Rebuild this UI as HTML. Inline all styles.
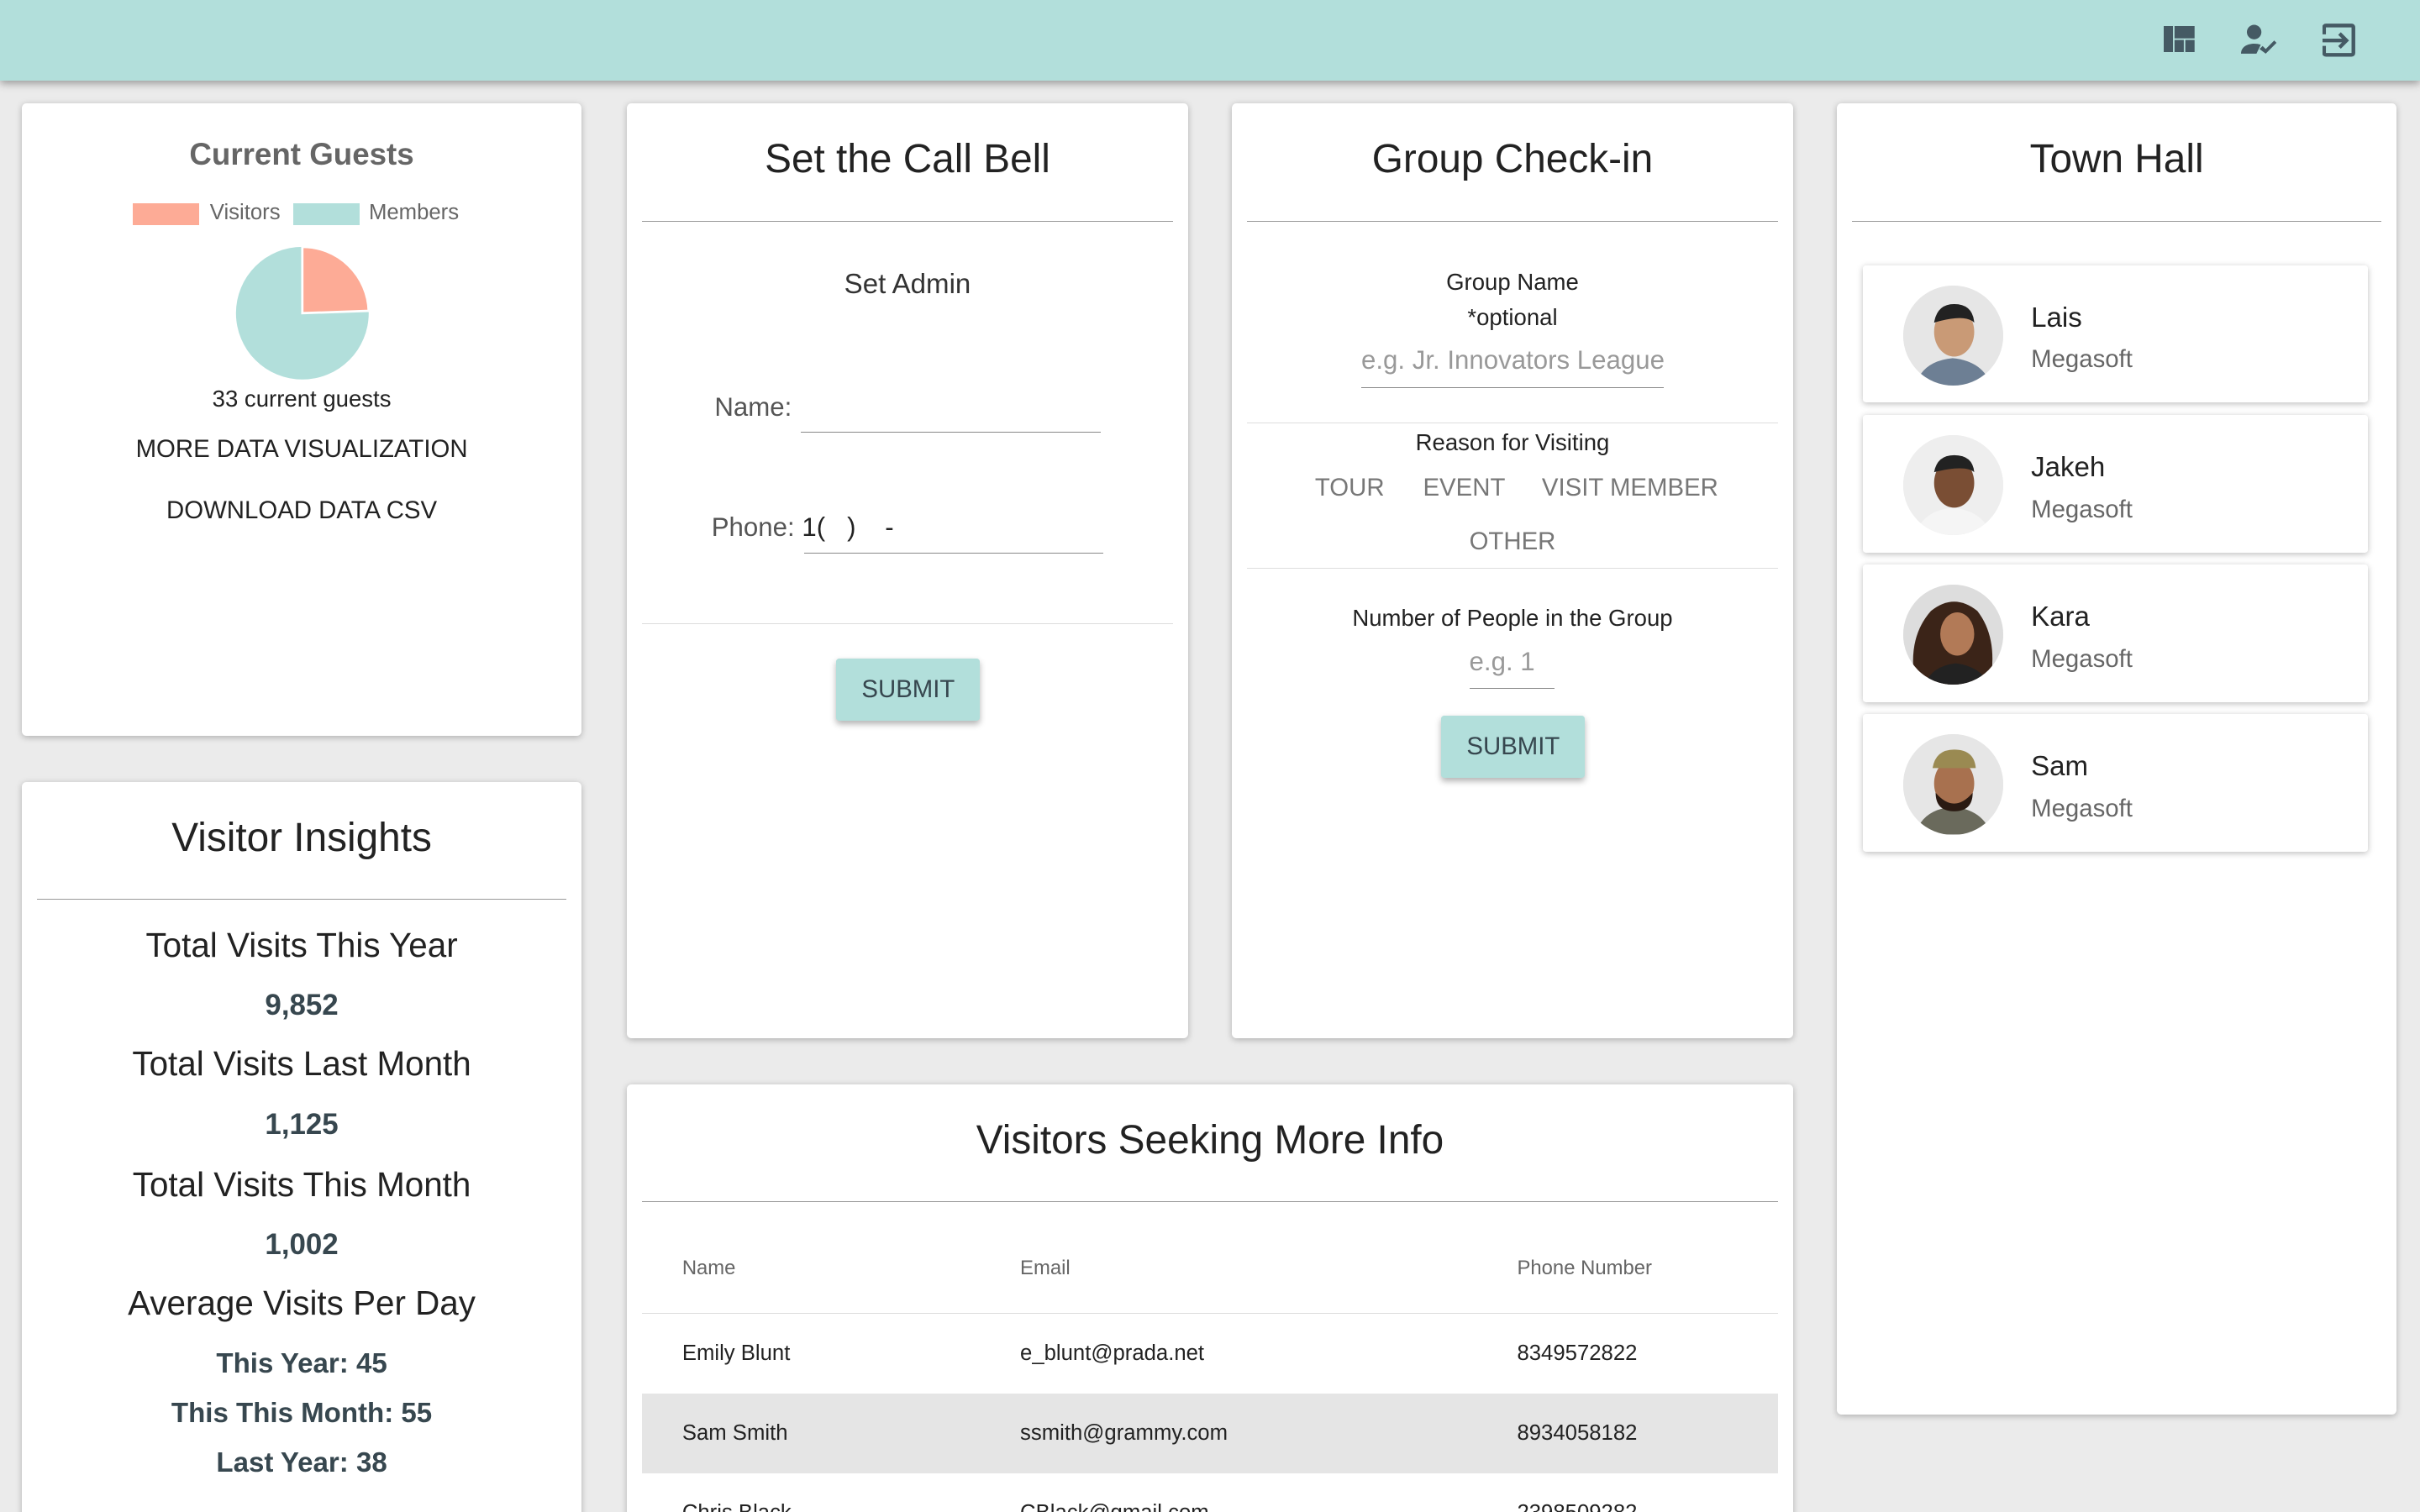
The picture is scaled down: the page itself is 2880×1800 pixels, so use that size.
<!DOCTYPE html>
<html><head><meta charset="utf-8"><style>
*{box-sizing:border-box;margin:0;padding:0}
html,body{width:2880px;height:1800px;overflow:hidden;background:#ebebeb}
#r{zoom:1.83673;width:1568px;height:980px;position:relative;font-family:"Liberation Sans",Helvetica,Arial,sans-serif;color:#222}
.hdr{position:absolute;left:0;top:0;width:1568px;height:52px;background:#b2dfdb;box-shadow:0 2px 5px rgba(0,0,0,.35)}
.card{position:absolute;background:#fff;border-radius:3px;box-shadow:0 1px 4px rgba(0,0,0,.25);text-align:center}
.t{font-size:26px;color:#222;padding-top:21px;height:77px;border-bottom:1px solid #999;margin:0 10px}
.c{position:absolute;left:0;right:0;text-align:center}
.btn{position:absolute;background:#b2dfdb;color:#37474f;font-size:16px;width:93px;height:40px;line-height:40px;border-radius:2px;box-shadow:0 2px 4px rgba(0,0,0,.3)}
.person{position:absolute;left:17px;width:327px;height:89px;background:#fff;box-shadow:0 1px 4px rgba(0,0,0,.25);border-radius:2px;text-align:left}
.av{position:absolute;left:26px;top:13px;width:65px;height:65px;border-radius:50%;overflow:hidden;background:#e8e8e8}
.nm{position:absolute;left:109px;top:24px;font-size:18px}
.co{position:absolute;left:109px;top:52px;font-size:16px;color:#666}
.ins{font-size:22px;color:#222}
.num{font-size:19px;font-weight:bold;color:#37474f}
td{font-size:14px;padding-left:26px;height:52px}
</style></head><body><div id="r">
<div class="hdr">
<svg style="position:absolute;left:1402px;top:17px" width="20" height="17" viewBox="0 0 20 17" fill="#455a64"><rect x="0" y="0" width="6" height="17"/><rect x="7" y="0" width="13" height="8"/><rect x="7" y="9" width="6" height="8"/><rect x="14" y="9" width="6" height="8"/></svg>
<svg style="position:absolute;left:1452px;top:16px" width="24" height="20" viewBox="0 0 24 20" fill="#455a64"><circle cx="8.5" cy="5" r="4.7"/><path d="M0 19c0-5 5-6.5 8.5-6.5 1.5 0 3 .2 4.3.7L10 19z"/><path d="M12 16l2-2 2 2 5.5-5.5 1.5 1.5-7 7z"/></svg>
<svg style="position:absolute;left:1505px;top:15px" width="22" height="22" viewBox="0 0 22 22" fill="none" stroke="#455a64" stroke-width="2.4"><path d="M1 7V2.5Q1 1.3 2.3 1.3h16.4q1.3 0 1.3 1.3v16.4q0 1.3-1.3 1.3H2.3Q1 20.3 1 19v-4.5"/><path d="M0 11h15M11 6.5l4.5 4.5-4.5 4.5"/></svg>
</div>

<div class="card" style="left:14px;top:67px;width:363px;height:410px">
<div class="c" style="top:22px;font-size:20px;font-weight:bold;color:#666">Current Guests</div>
<div style="position:absolute;left:72px;top:65px;width:43px;height:14px;background:#fdab96"></div>
<div style="position:absolute;left:122px;top:63px;font-size:14px;color:#666">Visitors</div>
<div style="position:absolute;left:176px;top:65px;width:43px;height:14px;background:#b2dfdb"></div>
<div style="position:absolute;left:225px;top:63px;font-size:14px;color:#666">Members</div>
<svg style="position:absolute;left:138px;top:92px" width="90" height="88" viewBox="0 0 90 88"><circle cx="44" cy="44" r="43" fill="#b2dfdb"/><path d="M44 44V1A43 43 0 0 1 87 42.5z" fill="#fdab96" stroke="#fff" stroke-width="1.5"/></svg>
<div class="c" style="top:183px;font-size:15px">33 current guests</div>
<div class="c" style="top:215px;font-size:16px">MORE DATA VISUALIZATION</div>
<div class="c" style="top:255px;font-size:16px">DOWNLOAD DATA CSV</div>
</div>

<div class="card" style="left:14px;top:507px;width:363px;height:480px">
<div class="t" style="height:76px">Visitor Insights</div>
<div class="c ins" style="top:93px">Total Visits This Year</div>
<div class="c num" style="top:134px">9,852</div>
<div class="c ins" style="top:170px">Total Visits Last Month</div>
<div class="c num" style="top:211px">1,125</div>
<div class="c ins" style="top:248px">Total Visits This Month</div>
<div class="c num" style="top:289px">1,002</div>
<div class="c ins" style="top:325px">Average Visits Per Day</div>
<div class="c num" style="top:367px;font-size:18px">This Year: 45</div>
<div class="c num" style="top:399px;font-size:18px">This This Month: 55</div>
<div class="c num" style="top:431px;font-size:18px">Last Year: 38</div>
</div>

<div class="card" style="left:406px;top:67px;width:364px;height:606px">
<div class="t">Set the Call Bell</div>
<div class="c" style="top:107px;font-size:18px;color:#333">Set Admin</div>
<div style="position:absolute;left:57px;top:187px;font-size:17px;color:#555">Name:</div>
<div style="position:absolute;left:113px;top:213px;width:194px;border-top:1px solid #888"></div>
<div style="position:absolute;left:55px;top:265px;font-size:17px;color:#555">Phone: <span style="color:#222">1(&nbsp;&nbsp;&nbsp;)&nbsp;&nbsp;&nbsp;&nbsp;-</span></div>
<div style="position:absolute;left:115px;top:291px;width:194px;border-top:1px solid #888"></div>
<div style="position:absolute;left:10px;right:10px;top:337px;border-top:1px solid #ddd"></div>
<div class="btn" style="left:136px;top:360px">SUBMIT</div>
</div>

<div class="card" style="left:798px;top:67px;width:364px;height:606px">
<div class="t">Group Check-in</div>
<div class="c" style="top:107px;font-size:15px">Group Name</div>
<div class="c" style="top:130px;font-size:15px">*optional</div>
<div style="position:absolute;left:84px;top:157px;width:196px;overflow:hidden;white-space:nowrap;font-size:17px;color:#999;text-align:left">e.g. Jr. Innovators League</div>
<div style="position:absolute;left:84px;top:184px;width:196px;border-top:1px solid #888"></div>
<div style="position:absolute;left:10px;right:10px;top:207px;border-top:1px solid #ddd"></div>
<div class="c" style="top:211px;font-size:15px">Reason for Visiting</div>
<div style="position:absolute;left:54px;top:240px;font-size:16px;color:#777">TOUR</div>
<div style="position:absolute;left:124px;top:240px;font-size:16px;color:#777">EVENT</div>
<div style="position:absolute;left:201px;top:240px;font-size:16px;color:#777">VISIT MEMBER</div>
<div class="c" style="top:275px;font-size:16px;color:#777">OTHER</div>
<div style="position:absolute;left:10px;right:10px;top:301px;border-top:1px solid #ddd"></div>
<div class="c" style="top:325px;font-size:15px">Number of People in the Group</div>
<div style="position:absolute;left:154px;top:352px;font-size:17px;color:#999">e.g. 1</div>
<div style="position:absolute;left:154px;top:379px;width:55px;border-top:1px solid #888"></div>
<div class="btn" style="left:136px;top:397px">SUBMIT</div>
</div>

<div class="card" style="left:1190px;top:67px;width:363px;height:850px">
<div class="t">Town Hall</div>
<div class="person" style="top:105px"><div class="av"><svg width="65" height="65"><rect width="65" height="65" fill="#e6e6e6"/><path d="M8 65q4-16 24-18 20 2 25 18z" fill="#6d7f94"/><ellipse cx="33" cy="30" rx="13" ry="16" fill="#c99a76"/><path d="M20 24q2-12 13-12 12 0 13 12-6-6-26 0z" fill="#222"/></svg></div><div class="nm">Lais</div><div class="co">Megasoft</div></div>
<div class="person" style="top:202px"><div class="av"><svg width="65" height="65"><rect width="65" height="65" fill="#eee"/><path d="M8 65q4-16 24-18 20 2 25 18z" fill="#f5f5f5"/><ellipse cx="33" cy="31" rx="13" ry="16" fill="#7a4e34"/><path d="M20 24q2-11 13-11 12 0 13 11-6-5-26 0z" fill="#222"/></svg></div><div class="nm">Jakeh</div><div class="co">Megasoft</div></div>
<div class="person" style="top:299px"><div class="av"><svg width="65" height="65"><rect width="65" height="65" fill="#ddd"/><path d="M8 65q-6-30 10-48 15-12 30 0 14 18 8 48z" fill="#3b2418"/><path d="M14 65q4-12 20-14 16 2 22 14z" fill="#222"/><ellipse cx="35" cy="32" rx="11" ry="14" fill="#b27a57"/></svg></div><div class="nm">Kara</div><div class="co">Megasoft</div></div>
<div class="person" style="top:396px"><div class="av"><svg width="65" height="65"><rect width="65" height="65" fill="#e6e6e6"/><path d="M8 65q4-16 24-18 20 2 25 18z" fill="#6a6a5c"/><ellipse cx="33" cy="32" rx="13" ry="16" fill="#a8714f"/><path d="M19 22q2-12 14-12 13 0 14 12z" fill="#9a8a52"/><path d="M21 38q12 14 24 0 0 12-12 12-12 0-12-12z" fill="#2a1a12"/></svg></div><div class="nm">Sam</div><div class="co">Megasoft</div></div>
</div>

<div class="card" style="left:406px;top:703px;width:756px;height:300px">
<div class="t" style="height:76px">Visitors Seeking More Info</div>
<table style="position:absolute;left:10px;top:90px;width:736px;border-collapse:collapse;text-align:left">
<tr style="height:58px;border-bottom:1px solid #ddd"><td style="width:219px;font-size:13px;color:#666">Name</td><td style="width:322px;font-size:13px;color:#666">Email</td><td style="font-size:13px;color:#666">Phone Number</td></tr>
<tr><td>Emily Blunt</td><td>e_blunt@prada.net</td><td>8349572822</td></tr>
<tr style="background:#e5e5e5"><td>Sam Smith</td><td>ssmith@grammy.com</td><td>8934058182</td></tr>
<tr><td>Chris Black</td><td>CBlack@gmail.com</td><td>2398509282</td></tr>
</table>
</div>
</div></body></html>
